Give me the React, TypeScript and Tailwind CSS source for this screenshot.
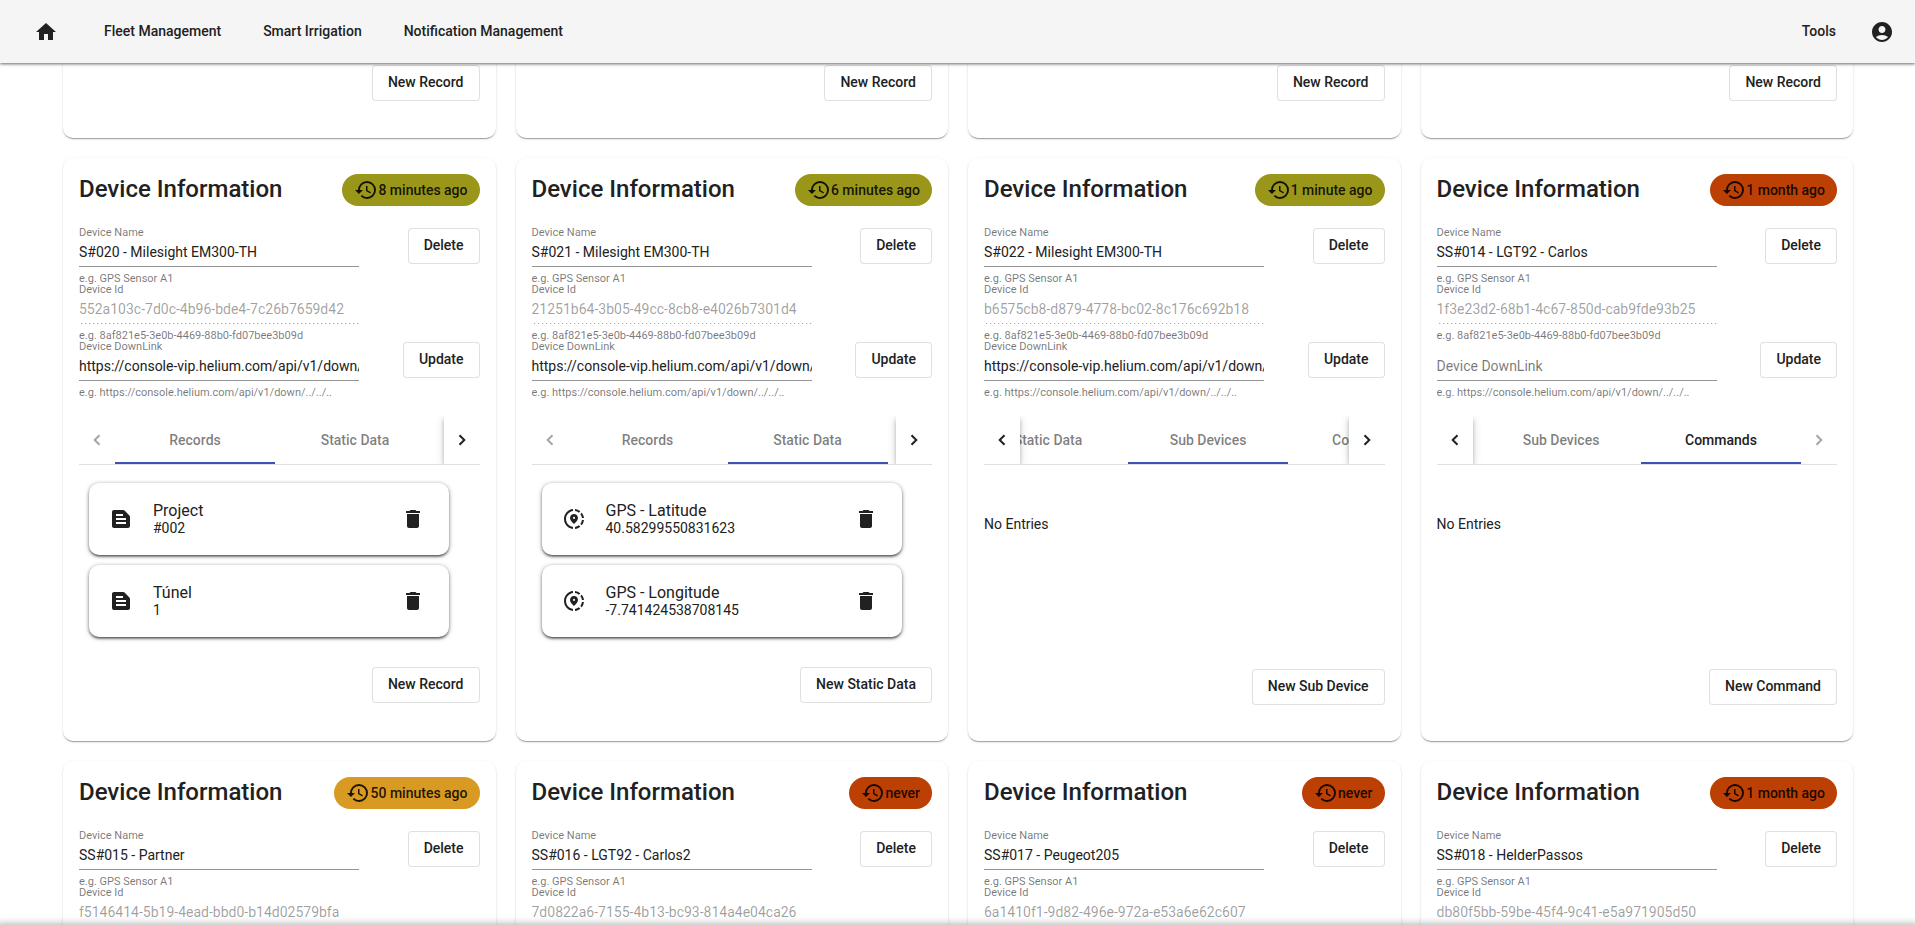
import { useId, type ReactNode } from "react";
import {
  MdAccountCircle,
  MdDelete,
  MdHistory,
  MdHome,
  MdShareLocation,
  MdTextSnippet,
} from "react-icons/md";

type Entry = { title: string; value: string };

type Device = {
  name: string;
  id: string;
  downlink: string;
  seen: string;
  tone: "recent" | "stale" | "lost";
  tab: number;
  /** First and last tab inside the scrolled viewport. */
  inView: [number, number];
  scroll: string;
  activeTab?: boolean;
  kind: "record" | "gps";
  entries: Entry[];
  action: string;
};

const TABS = ["Records", "Static Data", "Sub Devices", "Commands"];
const LINK = "https://console-vip.helium.com/api/v1/down/";

const TONES = {
  recent: "bg-[#999619]",
  stale: "bg-[#d99a23]",
  lost: "bg-[#bc3f03]",
};

const base = {
  tab: 0,
  inView: [0, 1] as [number, number],
  scroll: "justify-start",
  kind: "record" as const,
  entries: [] as Entry[],
  action: "New Record",
};

const DEVICES: Device[] = [
  {
    ...base,
    name: "S#020 - Milesight EM300-TH",
    id: "552a103c-7d0c-4b96-bde4-7c26b7659d42",
    downlink: LINK,
    seen: "8 minutes ago",
    tone: "recent",
    entries: [
      { title: "Project", value: "#002" },
      { title: "Túnel", value: "1" },
    ],
  },
  {
    ...base,
    name: "S#021 - Milesight EM300-TH",
    id: "21251b64-3b05-49cc-8cb8-e4026b7301d4",
    downlink: LINK,
    seen: "6 minutes ago",
    tone: "recent",
    tab: 1,
    kind: "gps",
    entries: [
      { title: "GPS - Latitude", value: "40.58299550831623" },
      { title: "GPS - Longitude", value: "-7.741424538708145" },
    ],
    action: "New Static Data",
  },
  {
    ...base,
    name: "S#022 - Milesight EM300-TH",
    id: "b6575cb8-d879-4778-bc02-8c176c692b18",
    downlink: LINK,
    seen: "1 minute ago",
    tone: "recent",
    tab: 2,
    inView: [1, 3],
    scroll: "-ml-[212px]",
    action: "New Sub Device",
  },
  {
    ...base,
    name: "SS#014 - LGT92 - Carlos",
    id: "1f3e23d2-68b1-4c67-850d-cab9fde93b25",
    downlink: "",
    seen: "1 month ago",
    tone: "lost",
    tab: 3,
    inView: [2, 3],
    scroll: "justify-end",
    activeTab: true,
    action: "New Command",
  },
  { ...base, name: "SS#015 - Partner", id: "f5146414-5b19-4ead-bbd0-b14d02579bfa", downlink: "", seen: "50 minutes ago", tone: "stale" },
  { ...base, name: "SS#016 - LGT92 - Carlos2", id: "7d0822a6-7155-4b13-bc93-814a4e04ca26", downlink: "", seen: "never", tone: "lost" },
  { ...base, name: "SS#017 - Peugeot205", id: "6a1410f1-9d82-496e-972a-e53a6e62c607", downlink: "", seen: "never", tone: "lost" },
  { ...base, name: "SS#018 - HelderPassos", id: "db80f5bb-59be-45f4-9c41-e5a971905d50", downlink: "", seen: "1 month ago", tone: "lost" },
];

const CARD_SHADOW =
  "shadow-[0_2px_1px_-1px_rgba(0,0,0,0.2),0_1px_1px_0_rgba(0,0,0,0.14),0_1px_3px_0_rgba(0,0,0,0.12)]";

function OutlineButton({ children }: { children: ReactNode }) {
  return (
    <button
      type="button"
      className="h-9 shrink-0 rounded-[4px] border border-black/12 bg-white px-[15px] pb-[2px] text-sm font-medium"
    >
      {children}
    </button>
  );
}

function Field({
  label,
  value,
  hint,
  disabled = false,
}: {
  label: string;
  value: string;
  hint: string;
  disabled?: boolean;
}) {
  const id = useId();
  return (
    <div className="flex h-[57px] flex-col">
      <label htmlFor={id} className={`h-3 text-[11px] leading-3 text-black/54 ${value ? "" : "invisible"}`}>
        {label}
      </label>
      <input
        id={id}
        defaultValue={value}
        placeholder={label}
        disabled={disabled}
        className={`h-7 w-full shrink-0 text-sm outline-none placeholder:text-black/54 ${
          disabled
            ? "bg-[linear-gradient(to_right,rgba(0,0,0,0.42)_0,rgba(0,0,0,0.42)_33%,transparent_0)] bg-[length:4px_1px] bg-bottom bg-repeat-x pb-[2px] text-black/38"
            : "border-b border-black/42 pb-px"
        }`}
      />
      <p className="pt-[6px] text-[11px] leading-3 text-black/54">{hint}</p>
    </div>
  );
}

function Pager({ direction, enabled }: { direction: "left" | "right"; enabled: boolean }) {
  return (
    <button
      type="button"
      aria-label={direction === "left" ? "Previous tabs" : "Next tabs"}
      disabled={!enabled}
      className={`z-10 flex h-12 w-9 shrink-0 items-center justify-center bg-white ${
        enabled ? "shadow-[0_2px_4px_-1px_rgba(0,0,0,0.2),0_4px_5px_0_rgba(0,0,0,0.14),0_1px_10px_0_rgba(0,0,0,0.12)]" : ""
      }`}
    >
      <svg viewBox="0 0 12 12" className={`size-3 ${enabled ? "" : "opacity-40"}`} fill="none" stroke="#212121" strokeWidth="2">
        <path d={direction === "left" ? "M8.5 1.2 3.7 6l4.8 4.8" : "M3.5 1.2 8.3 6l-4.8 4.8"} />
      </svg>
    </button>
  );
}

function TabBar({ device }: { device: Device }) {
  const [first, last] = device.inView;
  return (
    <div className="flex overflow-hidden border-b border-black/12">
      <Pager direction="left" enabled={device.tab > 1} />
      <div className="min-w-0 flex-1">
        <div role="tablist" className={`flex ${device.scroll}`}>
          {TABS.map((tab, i) => (
            <button
              key={tab}
              type="button"
              role="tab"
              aria-selected={i === device.tab}
              className={`h-12 w-40 shrink-0 border-b-2 pt-px text-sm font-medium ${
                i === device.tab ? "border-[#3f51b5]" : "border-transparent"
              } ${i === device.tab && device.activeTab ? "" : "text-black/52"} ${
                i < first || i > last ? "invisible" : ""
              }`}
            >
              {tab}
            </button>
          ))}
        </div>
      </div>
      <Pager direction="right" enabled={device.tab < 3} />
    </div>
  );
}

function EntryRow({ entry, kind }: { entry: Entry; kind: Device["kind"] }) {
  const Icon = kind === "gps" ? MdShareLocation : MdTextSnippet;
  return (
    <li className="flex h-[72px] items-center gap-5 rounded-[10px] bg-white pr-6 pl-5 shadow-[0_3px_1px_-2px_rgba(0,0,0,0.2),0_2px_2px_0_rgba(0,0,0,0.3),0_1px_4px_0_rgba(20,40,40,0.5)]">
      <Icon className="size-6" />
      <div className="flex-1">
        <p className="text-base leading-[18px]">{entry.title}</p>
        <p className="text-sm leading-4">{entry.value}</p>
      </div>
      <button type="button" aria-label={`Delete ${entry.title}`}>
        <MdDelete className="size-6" />
      </button>
    </li>
  );
}

function DeviceCard({ device }: { device: Device }) {
  const hasEntries = device.entries.length > 0;
  return (
    <article className={`flex h-[583px] flex-col rounded-[10px] bg-white p-4 ${CARD_SHADOW}`}>
      <header className="flex h-8 items-start justify-between">
        <h2 className="text-2xl leading-[30px] font-medium">Device Information</h2>
        <span className={`flex h-8 items-center rounded-full px-3 text-sm font-medium text-black/87 ${TONES[device.tone]}`}>
          <MdHistory className="size-6" />
          {device.seen}
        </span>
      </header>

      <form className="mt-[21px] flex justify-between">
        <div className="w-[70%]">
          <Field label="Device Name" value={device.name} hint="e.g. GPS Sensor A1" />
          <Field label="Device Id" value={device.id} hint="e.g. 8af821e5-3e0b-4469-88b0-fd07bee3b09d" disabled />
          <Field label="Device DownLink" value={device.downlink} hint="e.g. https://console.helium.com/api/v1/down/../../.." />
        </div>
        <div className="flex flex-col items-end gap-[78px] pt-px">
          <OutlineButton>Delete</OutlineButton>
          <OutlineButton>Update</OutlineButton>
        </div>
      </form>

      <div className="mt-[18px]">
        <TabBar device={device} />
      </div>

      {hasEntries ? (
        <ul className="mt-[18px] ml-[10px] flex w-[90%] flex-col gap-[10px]">
          {device.entries.map((entry) => (
            <EntryRow key={entry.title} entry={entry} kind={device.kind} />
          ))}
        </ul>
      ) : (
        <p className="mt-[49px] text-sm">No Entries</p>
      )}

      <footer className={`mt-auto flex justify-end ${hasEntries ? "pb-[22px]" : "pb-5"}`}>
        <OutlineButton>{device.action}</OutlineButton>
      </footer>
    </article>
  );
}

export default function App() {
  return (
    <div className="flex h-screen flex-col overflow-hidden bg-white font-['Roboto',sans-serif] text-[#212121]">
      <nav className="z-20 flex h-[63px] shrink-0 items-center bg-[#f5f5f5] pr-[21px] pl-[34px] text-sm font-medium shadow-[0_1px_3px_rgba(0,0,0,0.6)]">
        <a href="#home" aria-label="Home">
          <MdHome className="size-6" />
        </a>
        <div className="ml-[46px] flex flex-1 gap-[42px] pb-[2px]">
          <a href="#fleet">Fleet Management</a>
          <a href="#irrigation">Smart Irrigation</a>
          <a href="#notifications">Notification Management</a>
        </div>
        <a href="#tools" className="pb-[2px]">Tools</a>
        <a href="#account" aria-label="Account" className="ml-[34px]">
          <MdAccountCircle className="size-6" />
        </a>
      </nav>

      <main className="min-h-0 flex-1 overflow-hidden pr-[62px] pl-[63px]">
        <div className="grid grid-cols-4 gap-5">
          {[0, 1, 2, 3].map((i) => (
            <section key={i} className={`flex h-[75px] items-start justify-end rounded-b-[10px] bg-white px-4 pt-[2px] ${CARD_SHADOW}`}>
              <OutlineButton>New Record</OutlineButton>
            </section>
          ))}
          {DEVICES.map((device) => (
            <DeviceCard key={device.id} device={device} />
          ))}
        </div>
      </main>
      <div className="z-20 h-0 shrink-0 shadow-[0_4px_8px_4px_rgba(0,0,0,0.4)]" />
    </div>
  );
}
